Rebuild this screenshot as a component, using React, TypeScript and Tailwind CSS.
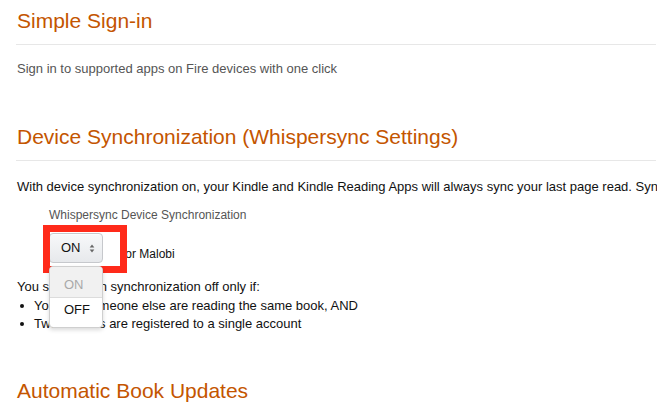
export default function App() {
  return (
    <div className="h-[413px] w-[657px] overflow-hidden bg-white font-['Liberation_Sans',Arial,sans-serif]">
      <div className="pl-[17px] pr-px">
        <h2 className="pt-[9px] text-[21px] leading-[24px] font-normal text-[#c45500]">Simple Sign-in</h2>
        <div className="-ml-px mt-[11px] h-px bg-[#e7e7e7]" />
        <p className="mt-[15px] text-[13px] leading-[18px] text-[#555]">
          Sign in to supported apps on Fire devices with one click
        </p>

        <h2 className="mt-[47px] text-[21px] leading-[24px] font-normal text-[#c45500]">
          Device Synchronization (Whispersync Settings)
        </h2>
        <div className="-ml-px mt-[11px] h-px bg-[#e7e7e7]" />
        <p className="mt-[17px] whitespace-nowrap text-[13px] leading-[18px] text-[#111]">
          With device synchronization on, your Kindle and Kindle Reading Apps will always sync your last page read. Synchronization of notes and highlights
        </p>

        <div className="ml-[32px] mt-[11px] text-[12px] leading-[16px] text-[#555]">Whispersync Device Synchronization</div>

        <div className="ml-[32px] mt-[10px] flex items-start">
          <div className="relative">
            <button
              type="button"
              className="relative z-10 flex h-[30px] w-[54px] items-center rounded-[4px] border border-[#c6c8cc] bg-gradient-to-b from-[#f7f8fa] to-[#e7e9ec] pl-[11px] text-[13px] leading-[18px] text-[#111] shadow-[0_1px_0_rgba(255,255,255,0.6)_inset]"
            >
              ON
              <svg viewBox="0 0 6 10" className="ml-[8px] h-[9px] w-[6px]" fill="#666">
                <path d="M3 0.5 L5.6 4 H0.4 Z" />
                <path d="M3 9.5 L5.6 6 H0.4 Z" />
              </svg>
            </button>
            <div className="absolute -left-[6px] -top-[8px] z-20 h-[48px] w-[84px] border-[7px] border-[#ff2a1a]" />
            <div className="absolute left-0 top-[33px] z-30 w-[54px] overflow-hidden rounded-[4px] border border-[#cfcfcf] bg-white text-[13px] leading-[18px] shadow-[0_2px_4px_rgba(0,0,0,0.15)]">
              <div className="h-[30px] bg-[#f1f1f1] pl-[14px] pt-[9px] text-[#a9a9a9]">ON</div>
              <div className="h-px bg-[#dcdcdc]" />
              <div className="h-[29px] pl-[14px] pt-[3px] text-[#111]">OFF</div>
            </div>
          </div>
          <span className="ml-[19px] mt-[13px] text-[12px] leading-[16px] text-[#111]">for Malobi</span>
        </div>

        <p className="mt-[15px] text-[13px] leading-[18px] text-[#111]">You should turn synchronization off only if:</p>
        <ul className="mt-[0.5px] text-[13px] leading-[18.5px] text-[#111]">
          <li className="flex items-center">
            <span className="ml-[3px] h-[4px] w-[4px] rounded-full bg-[#111]" />
            <span className="ml-[10px]">You and someone else are reading the same book, AND</span>
          </li>
          <li className="flex items-center">
            <span className="ml-[3px] h-[4px] w-[4px] rounded-full bg-[#111]" />
            <span className="ml-[10px]">Two devices are registered to a single account</span>
          </li>
        </ul>

        <h2 className="mt-[45px] text-[21px] leading-[24px] font-normal text-[#c45500]">Automatic Book Updates</h2>
      </div>
    </div>
  );
}
